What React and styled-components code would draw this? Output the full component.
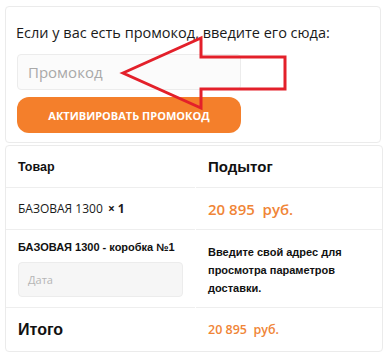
import React from 'react';
import styled, { createGlobalStyle } from 'styled-components';

const GlobalStyle = createGlobalStyle`
  body {
    margin: 0;
    background: #fff;
    font-family: "Open Sans", "Liberation Sans", sans-serif;
    color: #111;
  }
`;

const Page = styled.div`
  position: relative;
  width: 390px;
  height: 360px;
  padding: 6px 7px 0 5px;
  box-sizing: border-box;
  overflow: hidden;
`;

const PromoCard = styled.div`
  width: 376px;
  box-sizing: border-box;
  border: 1px solid #ebebeb;
  border-radius: 4px;
  padding: 16px 10px 9px 10px;
  display: flex;
  flex-direction: column;
`;

const PromoText = styled.div`
  font-size: 14.5px;
  line-height: 20px;
  color: #1a1a1a;
`;

const PromoInput = styled.div`
  margin: 11px 0 0 1px;
  width: 224px;
  height: 36px;
  box-sizing: border-box;
  border: 1px solid #ececec;
  border-radius: 4px;
  background: #fbfbfb;
  padding-left: 10px;
  display: flex;
  align-items: center;
  font-size: 15px;
  color: #a9a9a9;
`;

const ActivateButton = styled.button`
  margin: 7px 0 0 1px;
  width: 224px;
  height: 36px;
  border: none;
  border-radius: 12px;
  background: #f47f2b;
  color: #fff;
  font-family: "Open Sans", sans-serif;
  font-weight: 700;
  font-size: 11px;
  text-transform: uppercase;
  padding: 0;
`;

const OrderCard = styled.div`
  margin-top: 2px;
  width: 378px;
  box-sizing: border-box;
  border: 1px solid #ebebeb;
  border-radius: 4px;
  display: grid;
  grid-template-columns: 189px 1fr;
  column-gap: 1px;
`;

const Cell = styled.div`
  box-sizing: border-box;
  height: ${p => p.h}px;
  border-bottom: ${p => (p.last ? 'none' : '1px solid #eeeeee')};
  padding: 0 8px 0 12px;
  padding-top: ${p => p.pt || 0}px;
  display: flex;
  flex-direction: column;
  justify-content: ${p => (p.top ? 'flex-start' : 'center')};
`;

const HeadLabel = styled.div`
  font-family: "Liberation Sans", Arial, sans-serif;
  font-weight: 700;
  font-size: ${p => p.size}px;
  color: #111;
`;

const ItemName = styled.div`
  font-size: 12px;
  color: #1a1a1a;
  b {
    font-weight: 700;
    margin-left: 2px;
  }
`;

const Price = styled.div`
  font-weight: 600;
  font-size: ${p => p.size}px;
  color: #f08537;
  white-space: pre;
`;

const BoxTitle = styled.div`
  font-family: "Liberation Sans", Arial, sans-serif;
  font-weight: 700;
  font-size: 11px;
  line-height: 16px;
`;

const DateInput = styled.div`
  margin-top: 7px;
  width: 165px;
  height: 35px;
  box-sizing: border-box;
  border: 1px solid #ececec;
  border-radius: 4px;
  background: #f6f6f6;
  padding-left: 9px;
  display: flex;
  align-items: center;
  font-size: 11px;
  color: #b5b5b5;
`;

const DeliveryNote = styled.div`
  font-family: "Liberation Sans", Arial, sans-serif;
  font-weight: 700;
  font-size: 11px;
  line-height: 18px;
  color: #111;
`;

const Arrow = styled.svg`
  position: absolute;
  left: 0;
  top: 0;
  pointer-events: none;
`;

const App = () => (
  <Page>
    <GlobalStyle />
    <PromoCard>
      <PromoText>Если у вас есть промокод, введите его сюда:</PromoText>
      <PromoInput>Промокод</PromoInput>
      <ActivateButton>Активировать промокод</ActivateButton>
    </PromoCard>
    <OrderCard>
      <Cell h={42}>
        <HeadLabel size={12.5}>Товар</HeadLabel>
      </Cell>
      <Cell h={42}>
        <HeadLabel size={15}>Подытог</HeadLabel>
      </Cell>
      <Cell h={42}>
        <ItemName>БАЗОВАЯ 1300 <b>× 1</b></ItemName>
      </Cell>
      <Cell h={42}>
        <Price size={15}>20 895  руб.</Price>
      </Cell>
      <Cell h={78} top pt={9}>
        <BoxTitle>БАЗОВАЯ 1300 - коробка №1</BoxTitle>
        <DateInput>Дата</DateInput>
      </Cell>
      <Cell h={78} top pt={13}>
        <DeliveryNote>
          Введите свой адрес для<br />просмотра параметров<br />доставки.
        </DeliveryNote>
      </Cell>
      <Cell h={43} last>
        <HeadLabel size={16}>Итого</HeadLabel>
      </Cell>
      <Cell h={43} last>
        <Price size={12.5}>20 895  руб.</Price>
      </Cell>
    </OrderCard>
    <Arrow width="390" height="360" viewBox="0 0 390 360">
      <polygon
        points="123,73 201,38 201,57 285,57 285,89 201,89 201,108"
        fill="none"
        stroke="#e3202a"
        strokeWidth="3"
        strokeLinejoin="miter"
      />
    </Arrow>
  </Page>
);

export default App;
